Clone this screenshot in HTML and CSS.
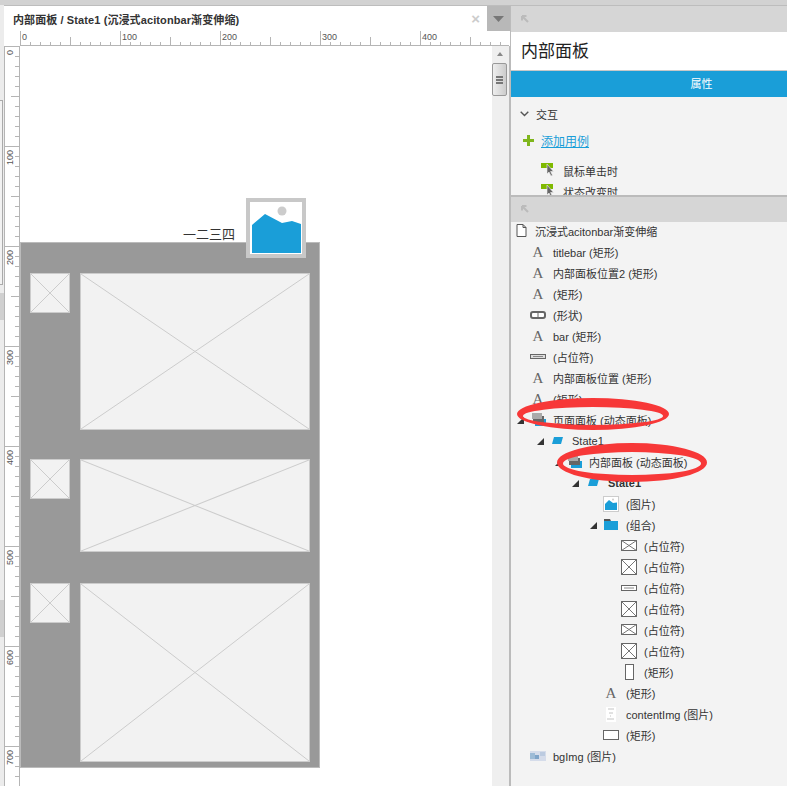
FILE: index.html
```html
<!DOCTYPE html>
<html lang="zh">
<head>
    <meta charset="UTF-8">
    <title>内部面板</title>
    <link rel="stylesheet" href="styles.css">
</head>
<body>
<div class="app">
    <div class="left-edge">
        <div class="edge-box"></div>
        <div class="edge-band band-1"></div>
        <div class="edge-band band-2"></div>
    </div>
    <div class="editor">
        <div class="tabbar">
            <div class="tab"><span class="tab-title">内部面板 / State1 (沉浸式acitonbar渐变伸缩)</span><span class="tab-close">×</span></div>
            <div class="tab-menu"><svg width="11" height="6" viewBox="0 0 11 6"><path d="M0 0h11L5.500 6z" fill="#777"/></svg></div>
        </div>
        <div class="ruler-h" id="rulerH"></div>
        <div class="editor-body">
            <div class="ruler-v" id="rulerV"></div>
            <div class="canvas">
                <div class="canvas-top">
                    <span class="label-text">一二三四</span>
                </div>
                <div class="gray-panel">
                    <div class="row row-1">
                        <div class="ph thumb"><svg preserveAspectRatio="none" viewBox="0 0 100 100"><path d="M0 0L100 100M100 0L0 100" vector-effect="non-scaling-stroke"/></svg></div>
                        <div class="ph main"><svg preserveAspectRatio="none" viewBox="0 0 100 100"><path d="M0 0L100 100M100 0L0 100" vector-effect="non-scaling-stroke"/></svg></div>
                    </div>
                    <div class="row row-2">
                        <div class="ph thumb"><svg preserveAspectRatio="none" viewBox="0 0 100 100"><path d="M0 0L100 100M100 0L0 100" vector-effect="non-scaling-stroke"/></svg></div>
                        <div class="ph main"><svg preserveAspectRatio="none" viewBox="0 0 100 100"><path d="M0 0L100 100M100 0L0 100" vector-effect="non-scaling-stroke"/></svg></div>
                    </div>
                    <div class="row row-3">
                        <div class="ph thumb"><svg preserveAspectRatio="none" viewBox="0 0 100 100"><path d="M0 0L100 100M100 0L0 100" vector-effect="non-scaling-stroke"/></svg></div>
                        <div class="ph main"><svg preserveAspectRatio="none" viewBox="0 0 100 100"><path d="M0 0L100 100M100 0L0 100" vector-effect="non-scaling-stroke"/></svg></div>
                    </div>
                </div>
                <div class="pic-widget">
                    <svg width="50" height="50" viewBox="0 0 50 50"><circle cx="31" cy="8" r="4.500" fill="#ccc"/><path d="M1 22L14 11L31 20L41 18L50 21V50H1z" fill="#1a9ed8"/></svg>
                </div>
            </div>
            <div class="scrollbar">
                <div class="scroll-up"></div>
                <div class="scroll-thumb"><i></i><i></i><i></i></div>
            </div>
        </div>
    </div>
    <div class="side">
        <div class="side-head"><svg class="pin" width="8" height="8" viewBox="0 0 8 8"><path d="M1 1v4.500M1 1h4.500M1 1l6 6" fill="none" stroke="#bbb" stroke-width="2"/></svg></div>
        <div class="side-title">内部面板</div>
        <div class="side-tab">属性</div>
        <div class="props">
            <div class="prop-group"><svg width="9" height="6" viewBox="0 0 9 6"><path d="M0.700 0.700L4.500 4.500L8.300 0.700" fill="none" stroke="#555" stroke-width="1.400"/></svg><span>交互</span></div>
            <div class="add-case"><svg width="11" height="11" viewBox="0 0 11 11"><path d="M4 0h3v4h4v3H7v4H4V7H0V4h4z" fill="#7fb61c"/></svg><a>添加用例</a></div>
            <div class="event"><svg width="13" height="15" viewBox="0 0 13 15"><rect width="12" height="5" fill="#7fb900"/><path d="M6 1v10l2-2 2 4 1.500-.7-1.900-3.800H12.500z" fill="#666" stroke="#f2f2f2" stroke-width=".6"/></svg><span>鼠标单击时</span></div>
            <div class="event"><svg width="13" height="15" viewBox="0 0 13 15"><rect width="12" height="5" fill="#7fb900"/><path d="M6 1v10l2-2 2 4 1.500-.7-1.900-3.800H12.500z" fill="#666" stroke="#f2f2f2" stroke-width=".6"/></svg><span>状态改变时</span></div>
        </div>
        <div class="side-head outline-head"><svg class="pin" width="8" height="8" viewBox="0 0 8 8"><path d="M1 1v4.500M1 1h4.500M1 1l6 6" fill="none" stroke="#bbb" stroke-width="2"/></svg></div>
        <div class="tree" id="tree"></div>
        <svg class="marks" width="276" height="90" viewBox="0 0 276 90">
            <path fill-rule="evenodd" fill="#f73838" d="M6 18a76 16 0 1 0 152 0a76 16 0 1 0 -152 0zM12 20a70 9 0 1 0 140 0a70 9 0 1 0 -140 0z"/>
            <path fill-rule="evenodd" fill="#f73838" d="M46 66.500a75 19.500 0 1 0 150 0a75 19.500 0 1 0 -150 0zM52 67.500a69 11.500 0 1 0 138 0a69 11.500 0 1 0 -138 0z"/>
        </svg>
    </div>
</div>
<script src="app.js"></script>
</body>
</html>
```

FILE: styles.css
```css
* {
    box-sizing: border-box;
}
html, body {
    margin: 0;
    height: 100%;
    overflow: hidden;
}
body {
    font-family: "Liberation Sans", "Noto Sans CJK SC", sans-serif;
    font-size: 11px;
    color: #333;
    background: #d2d2d2;
}
.app {
    display: flex;
    width: 787px;
    height: 786px;
    padding-top: 5px;
}
.left-edge {
    width: 4px;
    flex: none;
    background: #ececec;
    padding-top: 95px;
}
.edge-box {
    width: 3px;
    height: 185px;
    border: 1px solid #aaa;
    border-left: none;
    background: #f2f2f2;
}
.edge-band {
    background: #d0d0d0;
}
.band-1 {
    height: 27px;
    margin-top: 8px;
}
.band-2 {
    height: 37px;
    margin-top: 280px;
}
.editor {
    width: 506px;
    flex: none;
    display: flex;
    flex-direction: column;
    background: #fff;
    border-top: 1px solid #bdbdbd;
}
.tabbar {
    height: 25px;
    flex: none;
    display: flex;
    background: #fff;
}
.tab {
    flex: 1;
    display: flex;
    align-items: center;
    justify-content: space-between;
    padding: 0 7px 0 9px;
}
.tab-title {
    font-weight: bold;
    color: #333;
    font-size: 11px;
    letter-spacing: 0.1px;
}
.tab-close {
    color: #ccc;
    font-size: 15px;
    font-weight: bold;
}
.tab-menu {
    width: 23px;
    background: #b8b8b8;
    display: flex;
    align-items: center;
    justify-content: center;
}
.ruler-h {
    height: 15px;
    flex: none;
    margin-left: 16px;
    margin-right: 1px;
    position: relative;
    border-bottom: 1px solid #b5b5b5;
    overflow: hidden;
    background: #fff;
}
.tick {
    position: absolute;
    background: #b5b5b5;
}
.ruler-num {
    position: absolute;
    font-size: 9px;
    color: #555;
    line-height: 10px;
}
.editor-body {
    flex: 1;
    display: flex;
    min-height: 0;
    border-right: 1px solid #bbb;
}
.ruler-v {
    width: 16px;
    flex: none;
    position: relative;
    border-left: 1px solid #b5b5b5;
    border-right: 1px solid #b5b5b5;
    overflow: hidden;
    background: #fff;
}
.ruler-v .ruler-num {
    transform: rotate(-90deg);
    transform-origin: 0 0;
}
.canvas {
    flex: 1;
    position: relative;
    background: #fff;
    min-width: 0;
}
.canvas-top {
    height: 196px;
    display: flex;
    align-items: flex-end;
    padding-left: 163px;
}
.label-text {
    font-size: 13px;
    line-height: 16px;
    color: #333;
    font-family: "Noto Sans CJK SC", sans-serif;
}
.gray-panel {
    width: 300px;
    height: 526px;
    background: #999;
    border: 1px solid #bbb;
    padding: 30px 9px 0;
}
.row {
    display: flex;
    gap: 10px;
}
.row-1 {
    height: 157px;
    margin-bottom: 29px;
}
.row-2 {
    height: 93px;
    margin-bottom: 31px;
}
.row-3 {
    height: 179px;
}
.ph {
    background: #f2f2f2;
    border: 1px solid #ccc;
    flex: none;
}
.ph svg {
    display: block;
    width: 100%;
    height: 100%;
    fill: none;
    stroke: #ccc;
    stroke-width: 1;
}
.thumb {
    width: 40px;
    height: 40px;
}
.main {
    width: 230px;
    height: 100%;
}
.pic-widget {
    position: absolute;
    left: 226px;
    top: 152px;
    width: 60px;
    height: 60px;
    border: 4px solid #c8c8c8;
    background: #fff;
    padding: 1px;
}
.pic-widget svg {
    display: block;
}
.scrollbar {
    width: 17px;
    flex: none;
    background: #efefef;
    position: relative;
    padding-top: 17px;
}
.scroll-up {
    position: absolute;
    top: 6px;
    left: 5px;
    width: 0;
    height: 0;
    border-left: 3px solid transparent;
    border-right: 3px solid transparent;
    border-bottom: 4px solid #888;
}
.scroll-thumb {
    width: 15px;
    height: 33px;
    border: 1px solid #999;
    border-radius: 2px;
    background: linear-gradient(to right, #eee, #ccc);
    display: flex;
    flex-direction: column;
    justify-content: center;
    align-items: center;
    gap: 1px;
}
.scroll-thumb i {
    display: block;
    width: 7px;
    height: 2px;
    background: #777;
}
.side {
    width: 277px;
    flex: none;
    position: relative;
    display: flex;
    flex-direction: column;
    background: #f3f3f3;
    border-left: 1px solid #bbb;
    border-top: 1px solid #bdbdbd;
}
.side-head {
    height: 26px;
    flex: none;
    background: #d6d6d6;
    padding: 9px 0 0 10px;
}
.pin {
    display: block;
}
.side-title {
    height: 39px;
    flex: none;
    background: #fff;
    font-size: 17px;
    line-height: 40px;
    color: #222;
    padding-left: 10px;
    border-bottom: 1px solid #c8c8c8;
}
.side-tab {
    height: 26px;
    flex: none;
    background: #1a9ed8;
    color: #fff;
    text-align: center;
    line-height: 26px;
    font-size: 11px;
    padding-left: 105px;
}
.props {
    height: 98px;
    flex: none;
    overflow: hidden;
    padding: 7px 0 0 9px;
}
.prop-group {
    display: flex;
    align-items: center;
    gap: 7px;
    height: 20px;
    color: #333;
}
.add-case {
    display: flex;
    align-items: center;
    gap: 7px;
    height: 20px;
    margin: 6px 0 10px 3px;
}
.add-case a {
    color: #1a9ed8;
    text-decoration: underline;
    font-size: 12px;
}
.event {
    display: flex;
    align-items: center;
    gap: 9px;
    height: 21px;
    padding-left: 21px;
    color: #333;
}
.outline-head {
    height: 27px;
    padding-top: 8px;
    border-top: 2px solid #bbb;
}
.tree {
    flex: 1;
    overflow: hidden;
    margin-top: -2px;
}
.tree-row {
    display: flex;
    align-items: center;
    height: 21px;
    position: relative;
    color: #333;
    white-space: nowrap;
}
.tree-row.bold {
    font-weight: bold;
}
.tree-arrow {
    position: absolute;
    top: 8px;
    width: 0;
    height: 0;
    border-bottom: 7px solid #333;
    border-left: 7px solid transparent;
}
.tree-icon {
    flex: none;
    display: flex;
    width: 20px;
    height: 17px;
    align-items: center;
    justify-content: center;
    margin-right: 5px;
}
.tree-row.root .tree-icon {
    margin-right: 4px;
}
.marks {
    position: absolute;
    left: 0;
    top: 390px;
    pointer-events: none;
}
```

FILE: app.js
```js
// rulers
var rulerH = document.getElementById("rulerH");
var rulerV = document.getElementById("rulerV");

function addTick(parent, css) {
    var t = document.createElement("div");
    t.className = "tick";
    for (var k in css) t.style[k] = css[k] + "px";
    parent.appendChild(t);
}
function addNum(parent, text, x, y) {
    var n = document.createElement("span");
    n.className = "ruler-num";
    n.textContent = text;
    n.style.left = x + "px";
    n.style.top = y + "px";
    parent.appendChild(n);
}

// horizontal ruler, 10px per tick
for (var i = 0; i <= 48; i++) {
    var h = i % 10 == 0 ? 14 : (i % 5 == 0 ? 8 : 3);
    addTick(rulerH, {left: i * 10, bottom: 0, width: 1, height: h});
    if (i % 10 == 0) addNum(rulerH, String(i * 10), i * 10 + 2, 1);
}
// vertical ruler, 10px per tick, the strip starts at 0 on the scale
for (var j = 0; j <= 75; j++) {
    var w = j % 10 == 0 ? 14 : (j % 5 == 0 ? 8 : 4);
    addTick(rulerV, {top: j * 10, right: 0, height: 1, width: w});
    var label = String(j * 10);
    if (j % 10 == 0) addNum(rulerV, label, 0, j * 10 + 4 + label.length * 5);
}

var icons = {
    text: '<svg width="16" height="15" viewBox="0 0 16 15"><text x="8" y="13" text-anchor="middle" font-family="Liberation Serif" font-size="15" fill="#666">A</text></svg>',
    page: '<svg width="11" height="13" viewBox="0 0 11 13"><path d="M1 .5h6l3 3v9H1z M7 .5v3h3" fill="#fff" stroke="#555"/></svg>',
    shape: '<svg width="16" height="8" viewBox="0 0 16 8"><rect x="1" y="1" width="14" height="6" rx="2" fill="#fff" stroke="#666" stroke-width="2"/><path d="M8 1v6" stroke="#666"/></svg>',
    bar: '<svg width="16" height="5" viewBox="0 0 16 5"><rect x=".5" y=".5" width="15" height="4" fill="#ddd" stroke="#666"/><path d="M3 2.500h10" stroke="#888"/></svg>',
    dyn: '<svg width="15" height="13" viewBox="0 0 15 13"><rect x="4" y="6" width="11" height="7" fill="#1a9ed8"/><rect x="2" y="3" width="11" height="7" fill="#666"/><rect x="1" y="0" width="10" height="6" fill="#aaa"/></svg>',
    state: '<svg width="11" height="7" viewBox="0 0 11 7"><path d="M2 0h9L9 7H0z" fill="#1a9ed8"/></svg>',
    pic: '<svg width="16" height="16" viewBox="0 0 16 16"><rect x=".5" y=".5" width="15" height="15" fill="#fff" stroke="#ccc"/><path d="M2 8L6 4L10 7L14 6.500V14H2z" fill="#1a9ed8"/><circle cx="10" cy="3.500" r="1" fill="#ccc"/></svg>',
    folder: '<svg width="14" height="11" viewBox="0 0 14 11"><path d="M0 0h6l1 2h-7z" fill="#555"/><path d="M0 2h14v9H0z" fill="#1a9ed8"/></svg>',
    phw: '<svg width="16" height="11" viewBox="0 0 16 11"><rect x=".5" y=".5" width="15" height="10" fill="#fff" stroke="#666"/><path d="M.5 .5L15.500 10.500M15.500 .5L.5 10.500" stroke="#777"/></svg>',
    phs: '<svg width="16" height="16" viewBox="0 0 16 16"><rect x=".5" y=".5" width="15" height="15" fill="#fff" stroke="#666"/><path d="M.5 .5L15.500 15.500M15.500 .5L.5 15.500" stroke="#777"/></svg>',
    phb: '<svg width="16" height="6" viewBox="0 0 16 6"><rect x=".5" y=".5" width="15" height="5" fill="#fff" stroke="#666"/><path d="M3 3h10" stroke="#888"/></svg>',
    tall: '<svg width="9" height="16" viewBox="0 0 9 16"><rect x=".5" y=".5" width="8" height="15" fill="#fff" stroke="#666"/></svg>',
    rect: '<svg width="16" height="10" viewBox="0 0 16 10"><rect x=".5" y=".5" width="15" height="9" fill="#fff" stroke="#666"/></svg>',
    img: '<svg width="10" height="16" viewBox="0 0 10 16"><rect x="0" y="1" width="10" height="15" fill="#fff"/><path d="M3 2v2M5 2v2M7 2v2M3 7h4M4 10h1M1 13h7" stroke="#c4c4c4"/></svg>',
    bg: '<svg width="16" height="10" viewBox="0 0 16 10"><rect width="16" height="10" fill="#d5dcea"/><rect x="0" y="2" width="5" height="6" fill="#9dbbd6"/><rect x="5" y="4" width="4" height="4" fill="#7fa4c8"/><rect x="10" y="1" width="5" height="4" fill="#bccbe0"/></svg>'
};

// [indent of the icon box, icon, label, left of the collapse triangle, bold]
var rows = [
    [0, "page", "沉浸式acitonbar渐变伸缩"],
    [17, "text", "titlebar (矩形)"],
    [17, "text", "内部面板位置2 (矩形)"],
    [17, "text", "(矩形)"],
    [17, "shape", "(形状)"],
    [17, "text", "bar (矩形)"],
    [17, "bar", "(占位符)"],
    [17, "text", "内部面板位置 (矩形)"],
    [17, "text", "(矩形)"],
    [17, "dyn", "页面面板 (动态面板)", 6],
    [36, "state", "State1", 26],
    [53, "dyn", "内部面板 (动态面板)", 44],
    [72, "state", "State1", 61, true],
    [90, "pic", "(图片)"],
    [90, "folder", "(组合)", 79],
    [108, "phw", "(占位符)"],
    [108, "phs", "(占位符)"],
    [108, "phb", "(占位符)"],
    [108, "phs", "(占位符)"],
    [108, "phw", "(占位符)"],
    [108, "phs", "(占位符)"],
    [108, "tall", "(矩形)"],
    [90, "text", "(矩形)"],
    [90, "img", "contentImg (图片)"],
    [90, "rect", "(矩形)"],
    [17, "bg", "bgImg (图片)"]
];

var tree = document.getElementById("tree");
rows.forEach(function (r, idx) {
    var row = document.createElement("div");
    row.className = "tree-row" + (r[4] ? " bold" : "") + (idx == 0 ? " root" : "");
    row.style.paddingLeft = r[0] + "px";
    if (r[3] !== undefined) {
        var a = document.createElement("span");
        a.className = "tree-arrow";
        a.style.left = r[3] + "px";
        row.appendChild(a);
    }
    var ic = document.createElement("span");
    ic.className = "tree-icon";
    ic.innerHTML = icons[r[1]];
    row.appendChild(ic);
    var label = document.createElement("span");
    label.textContent = r[2];
    row.appendChild(label);
    tree.appendChild(row);
});
```
